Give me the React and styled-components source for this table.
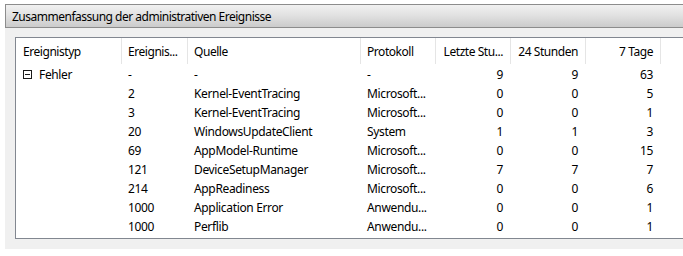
import React from "react";
import styled, { createGlobalStyle } from "styled-components";

const Global = createGlobalStyle`
  html, body {
    margin: 0;
    padding: 0;
    background: #ffffff;
    overflow: hidden;
  }
  body {
    font-family: "Noto Sans", "Open Sans", sans-serif;
    font-size: 12px;
    color: #000;
  }
`;

const Page = styled.div`
  padding: 4px 0 0 5px;
`;

const TitleBar = styled.div`
  height: 22px;
  display: flex;
  align-items: center;
  padding-left: 6px;
  border: 1px solid #8c8c8c;
  border-right: none;
  background: linear-gradient(#f1f1f1, #e2e2e2 45%, #cbcbcb);
  font-size: 12px;
  letter-spacing: -0.5px;
`;

const Panel = styled.div`
  background: #f0f0f0;
  padding: 9px 0 10px 10px;
`;

const ListBox = styled.div`
  background: #ffffff;
  border: 1px solid #828790;
  border-right: none;
  padding-bottom: 2px;
`;

const COLS = "106px 66px 173px 75px 75px 75px 75px 1fr";

const Row = styled.div`
  display: grid;
  grid-template-columns: ${COLS};
  height: ${(p) => (p.$header ? "26px" : "19px")};
  align-items: center;
  margin-bottom: ${(p) => (p.$header ? "1px" : "0")};
`;

const HeadCell = styled.div`
  height: 100%;
  display: flex;
  align-items: center;
  justify-content: ${(p) => (p.$right ? "flex-end" : "flex-start")};
  padding: ${(p) => (p.$right ? "0 7px 0 0" : `0 0 0 ${p.$first ? 7 : 6}px`)};
  border-right: ${(p) => (p.$last ? "none" : "1px solid #e5e5e5")};
  white-space: nowrap;
  overflow: hidden;
  letter-spacing: -0.45px;
`;

const Cell = styled.div`
  display: flex;
  align-items: center;
  justify-content: ${(p) => (p.$right ? "flex-end" : "flex-start")};
  padding: ${(p) => (p.$right ? "0 8px 0 0" : `0 0 0 ${p.$first ? 7 : 6}px`)};
  white-space: nowrap;
  overflow: hidden;
  letter-spacing: -0.35px;
`;

const Toggle = styled.span`
  width: 7px;
  height: 7px;
  border: 1px solid #1a1a1a;
  margin-right: 7px;
  position: relative;
  flex: none;
  &::after {
    content: "";
    position: absolute;
    left: 1px;
    right: 1px;
    top: 3px;
    height: 1px;
    background: #1a1a1a;
  }
`;

const headers = [
  { t: "Ereignistyp", first: true },
  { t: "Ereignis..." },
  { t: "Quelle" },
  { t: "Protokoll" },
  { t: "Letzte Stu...", right: true },
  { t: "24 Stunden", right: true },
  { t: "7 Tage", right: true },
];

const rows = [
  ["-", "-", "-", 9, 9, 63],
  ["2", "Kernel-EventTracing", "Microsoft...", 0, 0, 5],
  ["3", "Kernel-EventTracing", "Microsoft...", 0, 0, 1],
  ["20", "WindowsUpdateClient", "System", 1, 1, 3],
  ["69", "AppModel-Runtime", "Microsoft...", 0, 0, 15],
  ["121", "DeviceSetupManager", "Microsoft...", 7, 7, 7],
  ["214", "AppReadiness", "Microsoft...", 0, 0, 6],
  ["1000", "Application Error", "Anwendu...", 0, 0, 1],
  ["1000", "Perflib", "Anwendu...", 0, 0, 1],
];

export default function App() {
  return (
    <>
      <Global />
      <Page>
        <TitleBar>Zusammenfassung der administrativen Ereignisse</TitleBar>
        <Panel>
          <ListBox>
            <Row $header>
              {headers.map((h) => (
                <HeadCell key={h.t} $first={h.first} $right={h.right}>
                  {h.t}
                </HeadCell>
              ))}
              <HeadCell $last />
            </Row>
            {rows.map((r, i) => (
              <Row key={i}>
                <Cell $first>
                  {i === 0 && (
                    <>
                      <Toggle />
                      Fehler
                    </>
                  )}
                </Cell>
                <Cell>{r[0]}</Cell>
                <Cell>{r[1]}</Cell>
                <Cell>{r[2]}</Cell>
                <Cell $right>{r[3]}</Cell>
                <Cell $right>{r[4]}</Cell>
                <Cell $right>{r[5]}</Cell>
                <Cell />
              </Row>
            ))}
          </ListBox>
        </Panel>
      </Page>
    </>
  );
}
